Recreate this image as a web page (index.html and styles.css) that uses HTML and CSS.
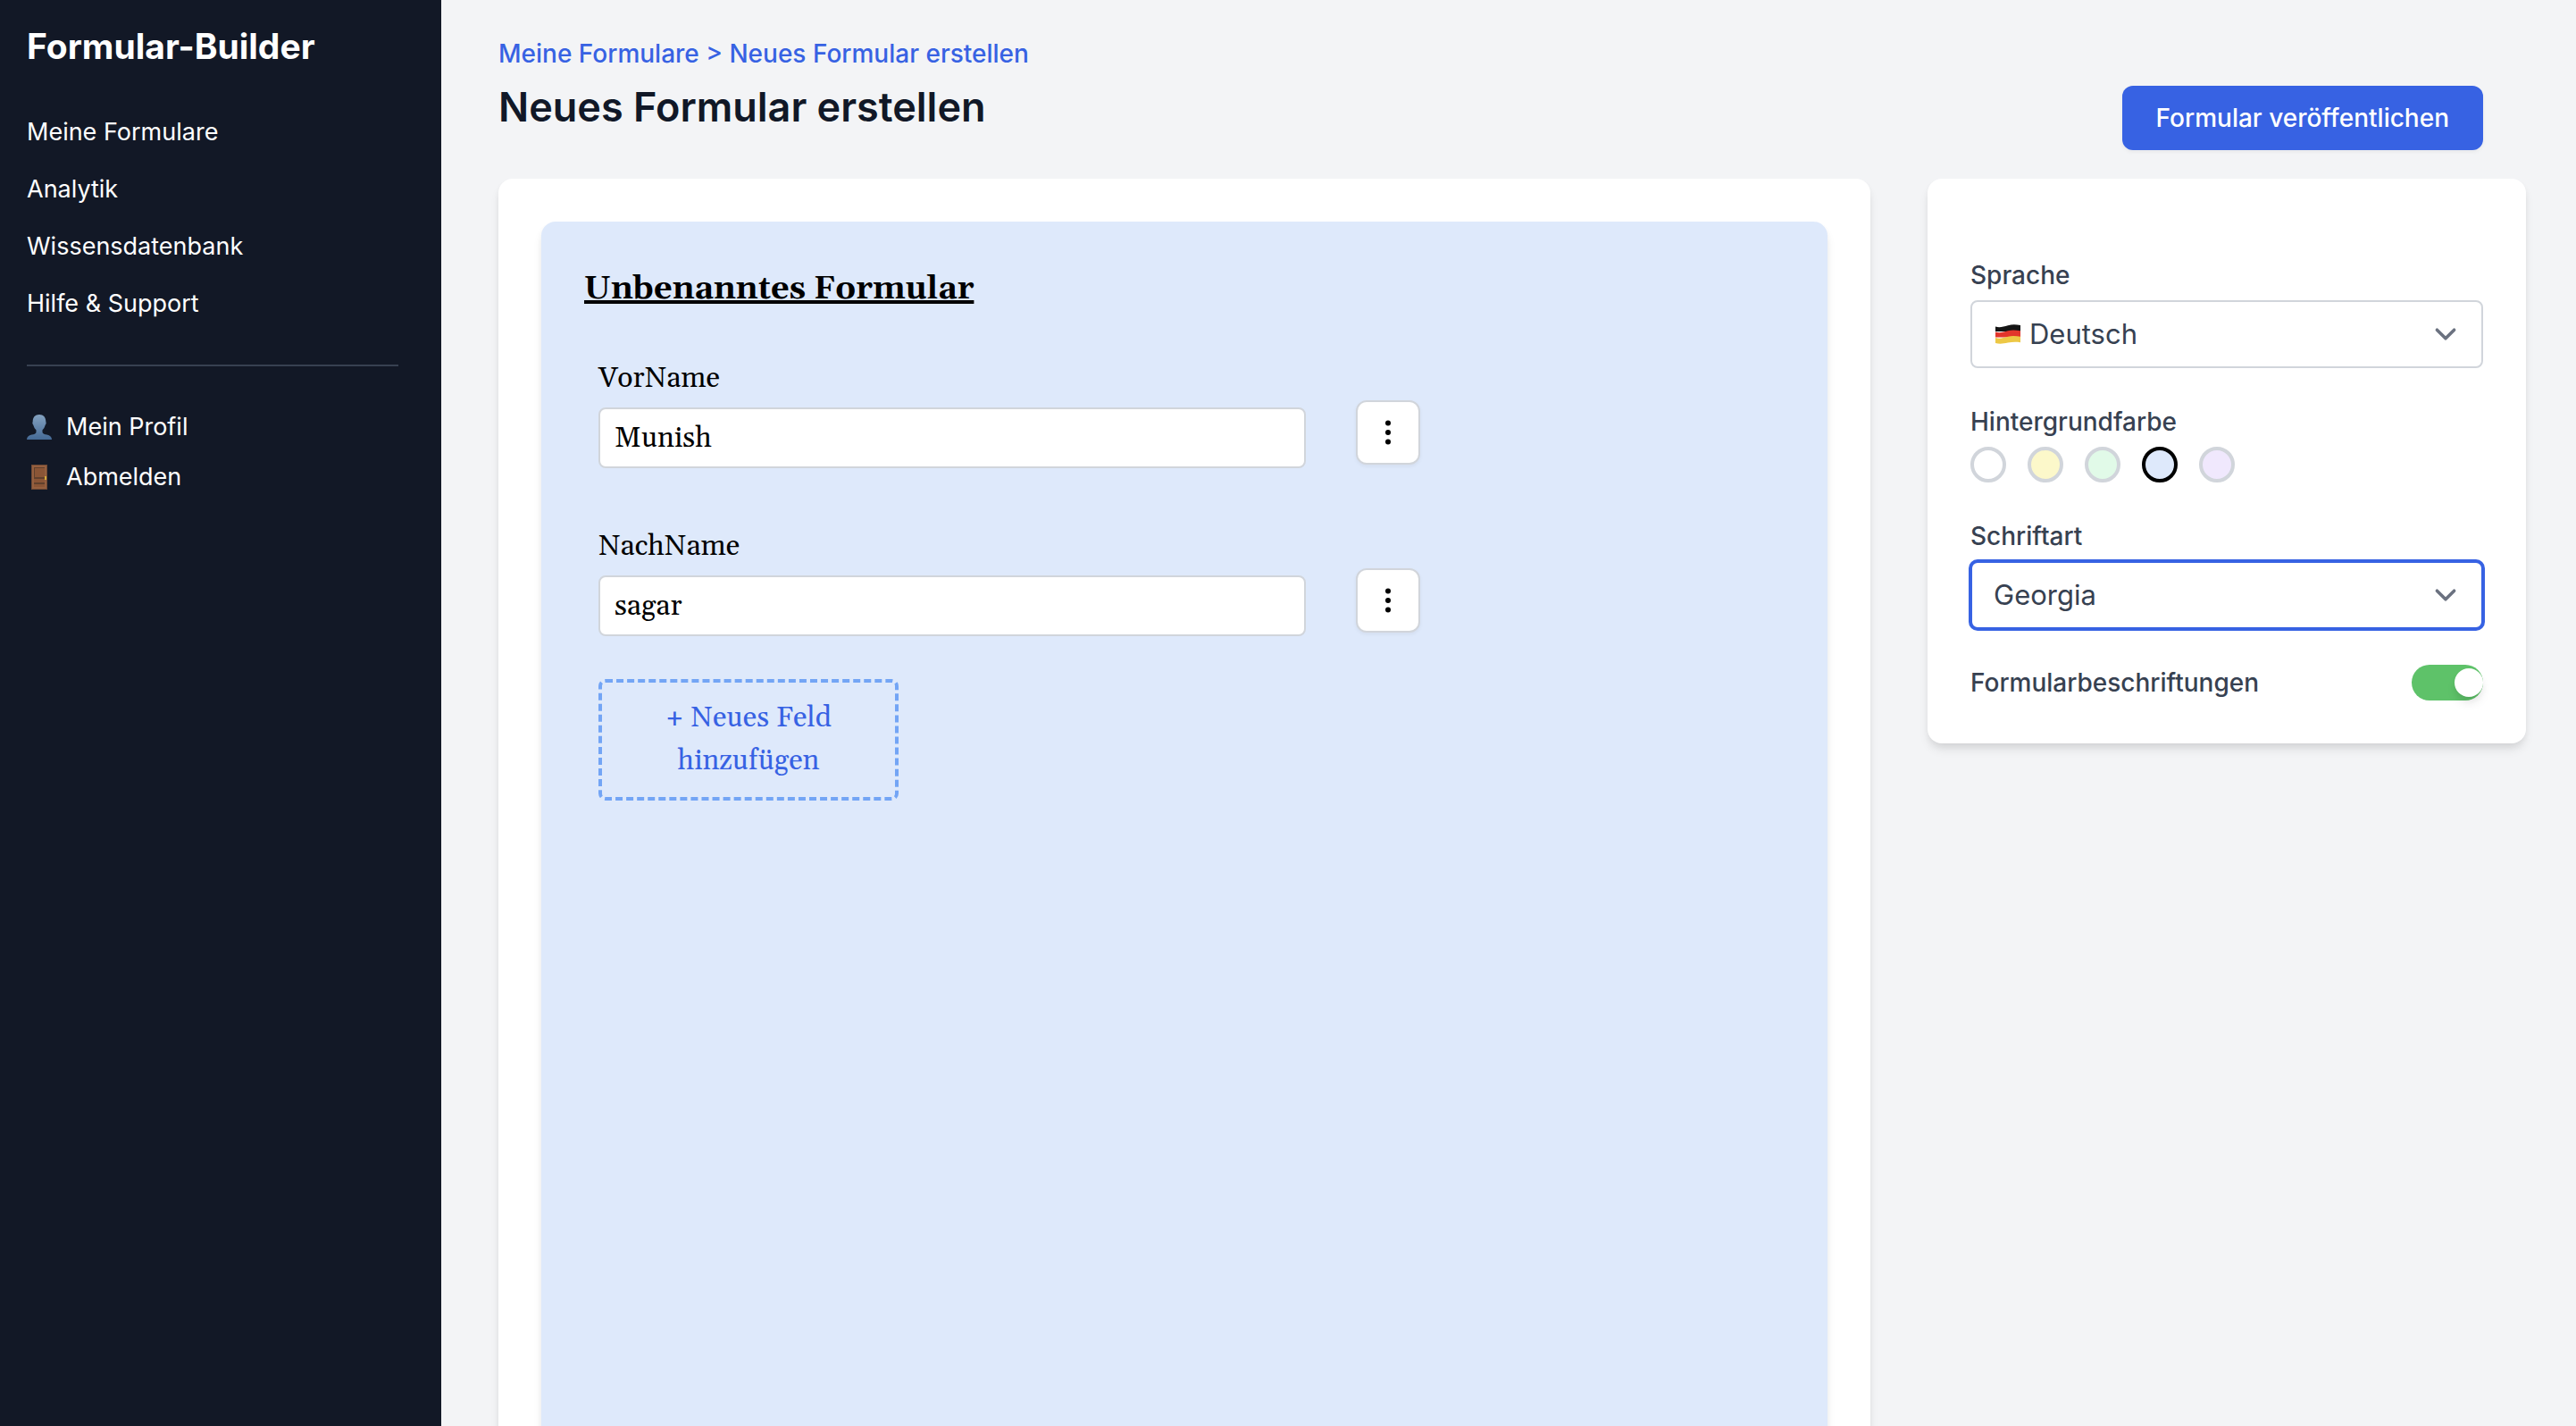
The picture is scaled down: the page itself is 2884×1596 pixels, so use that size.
FILE: index.html
```html
<!DOCTYPE html>
<html lang="de">
<head>
<meta charset="utf-8">
<meta name="viewport" content="width=device-width, initial-scale=1">
<title>Neues Formular erstellen – Formular-Builder</title>
<link rel="stylesheet" href="styles.css">
</head>
<body>
<div class="app">
  <aside class="sidebar">
    <div class="brand">Formular-Builder</div>
    <nav class="nav">
      <a href="#formulare">Meine Formulare</a>
      <a href="#analytik">Analytik</a>
      <a href="#wissen">Wissensdatenbank</a>
      <a href="#hilfe">Hilfe &amp; Support</a>
    </nav>
    <hr class="divider">
    <nav class="account">
      <a href="#profil">
        <svg class="glyph" viewBox="0 0 28 28" aria-hidden="true">
          <defs><linearGradient id="bust" x1="0" y1="0" x2="0" y2="1"><stop offset="0" stop-color="#84a2c0"/><stop offset="1" stop-color="#456a96"/></linearGradient></defs>
          <path fill="url(#bust)" d="M14 0c4.600 0 7.300 3 7.300 7.500 0 1 .4 1.200.3 2.200-.1 1.200-.8 1.500-1.100 2.500-.6 2.300-1.700 3.700-3 5.100v2.600c.5 1.600 2.500 2 5 2.600 3.500.8 5.500 2.500 5.500 5.500H0c0-3 2-4.700 5.500-5.500 2.500-.6 4.500-1 5-2.600v-2.600c-1.300-1.400-2.400-2.800-3-5.100-.3-1-1-1.300-1.100-2.500-.1-1 .3-1.200.3-2.200C6.700 3 9.400 0 14 0z"/>
        </svg>
        Mein Profil
      </a>
      <a href="#abmelden">
        <svg class="glyph" viewBox="0 0 28 28" aria-hidden="true">
          <path fill="#6f4a35" d="M5 0h18v28H5z"/>
          <path fill="#955f3f" d="M6 1h16v26H6z"/>
          <path fill="#8a5536" d="M8 3h12v11H8zM8 16h12v4H8zM8 21h12v4H8z"/>
          <path fill="#60402d" d="M8 3h12v1H8zM8 14h12v2H8zM8 20h12v2H8zM8 4h1v10H8z"/>
          <path fill="#d3aa3c" d="M20 13h2v4h-2z"/>
        </svg>
        Abmelden
      </a>
    </nav>
  </aside>

  <main class="main">
    <header class="header">
      <div>
        <a class="breadcrumb" href="#formulare">Meine Formulare &gt; Neues Formular erstellen</a>
        <h1 class="page-title">Neues Formular erstellen</h1>
      </div>
      <button class="publish" type="button">Formular veröffentlichen</button>
    </header>

    <div class="content">
      <section class="card">
        <form class="form">
          <h2 class="form-title">Unbenanntes Formular</h2>
          <div class="fields">
            <div class="field">
              <div class="field-body">
                <label for="vorname">VorName</label>
                <input id="vorname" type="text" value="Munish">
              </div>
              <button class="more" type="button" aria-label="Feldoptionen">
                <svg viewBox="0 0 32 32" aria-hidden="true"><circle cx="16" cy="5.500" r="3"/><circle cx="16" cy="16" r="3"/><circle cx="16" cy="26.500" r="3"/></svg>
              </button>
            </div>
            <div class="field">
              <div class="field-body">
                <label for="nachname">NachName</label>
                <input id="nachname" type="text" value="sagar">
              </div>
              <button class="more" type="button" aria-label="Feldoptionen">
                <svg viewBox="0 0 32 32" aria-hidden="true"><circle cx="16" cy="5.500" r="3"/><circle cx="16" cy="16" r="3"/><circle cx="16" cy="26.500" r="3"/></svg>
              </button>
            </div>
          </div>
          <button class="add" type="button">+ Neues Feld hinzufügen</button>
        </form>
      </section>

      <aside class="settings">
        <div class="setting">
          <label for="sprache">Sprache</label>
          <div class="with-flag">
            <select id="sprache"><option>Deutsch</option><option>English</option></select>
            <svg class="flag" viewBox="0 0 28 22" aria-hidden="true">
              <path fill="#151515" d="M0 2.500C5 4 9 2.500 14 1.200S23 .2 28 1v7H0z"/>
              <path fill="#e2352b" d="M0 8.500c5 1.500 9 0 14-1.300S23 6.500 28 7.200v7.300H0z"/>
              <path fill="#edc845" d="M0 15c5 1.500 9 0 14-1.300s9-.7 14 0v6.500c-5-.8-9-.6-14 .4S5 22.500 0 21z"/>
            </svg>
          </div>
        </div>
        <fieldset class="setting">
          <legend>Hintergrundfarbe</legend>
          <div class="swatches">
            <input class="white" type="radio" name="farbe" aria-label="Weiß">
            <input class="yellow" type="radio" name="farbe" aria-label="Gelb">
            <input class="green" type="radio" name="farbe" aria-label="Grün">
            <input class="blue" type="radio" name="farbe" aria-label="Blau" checked>
            <input class="purple" type="radio" name="farbe" aria-label="Violett">
          </div>
        </fieldset>
        <div class="setting">
          <label for="schriftart">Schriftart</label>
          <select id="schriftart" class="active"><option>Georgia</option><option>Arial</option></select>
        </div>
        <div class="setting toggle-row">
          <label for="beschriftungen">Formularbeschriftungen</label>
          <input id="beschriftungen" class="toggle" type="checkbox" role="switch" checked>
        </div>
      </aside>
    </div>
  </main>
</div>
</body>
</html>
```
FILE: styles.css
```css
*,
*::before {
  box-sizing: border-box;
}

:root {
  --blue: #3762e3;
  --sheet: #dee9fb;
  --border: #d1d5db;
  --ink: #374151;
  --shadow: 0 8px 12px -2px rgb(0 0 0 / 10%), 0 4px 8px -2px rgb(0 0 0 / 6%);
}

body {
  margin: 0;
  background: #f3f4f6;
  color: #111827;
  font: 400 27px/40px Inter, "Liberation Sans", sans-serif;
}

h1, h2, fieldset, legend {
  margin: 0;
  padding: 0;
  border: 0;
}

a {
  color: inherit;
  text-decoration: none;
}

button, input, select {
  margin: 0;
  font: inherit;
  color: inherit;
}

.app {
  display: flex;
  height: 100vh;
}

/* Sidebar */
.sidebar {
  flex: 0 0 494px;
  padding: 24px 48px 24px 30px;
  background: #121826;
  color: #fff;
}

.brand {
  margin-bottom: 48px;
  font-size: 39px;
  font-weight: 700;
  line-height: 56px;
}

.nav, .account {
  display: flex;
  flex-direction: column;
  gap: 24px;
}

.divider {
  height: 2px;
  margin: 48px 0;
  border: 0;
  background: #374151;
}

.account {
  gap: 16px;
}

.account a {
  display: flex;
  align-items: center;
  gap: 16px;
}

.glyph {
  width: 28px;
  height: 28px;
}

/* Main column */
.main {
  flex: 1;
  min-width: 0;
  padding: 40px 56px 0 64px;
  overflow: hidden auto;
  scrollbar-width: none;
}

.header {
  display: flex;
  align-items: flex-end;
  justify-content: space-between;
  height: 128px;
  margin-bottom: 32px;
  padding-right: 48px;
}

.header > div {
  align-self: flex-start;
}

.breadcrumb {
  display: block;
  color: var(--blue);
  font-size: 28px;
  font-weight: 500;
}

.page-title {
  margin-top: 8px;
  font-size: 45px;
  font-weight: 600;
  line-height: 64px;
}

.publish {
  padding: 16px 38px;
  border: 0;
  border-radius: 12px;
  background: var(--blue);
  color: #fff;
  font-size: 28px;
  font-weight: 500;
  box-shadow: 0 2px 4px rgb(0 0 0 / 5%);
}

.content {
  display: grid;
  grid-template-columns: minmax(0, 1fr) 670px;
  align-items: start;
  gap: 64px;
}

/* Form sheet */
.card {
  padding: 48px;
  border-radius: 16px;
  background: #fff;
  box-shadow: var(--shadow);
}

.form {
  min-height: 1600px;
  padding: 48px;
  border-radius: 16px;
  background: var(--sheet);
  color: #000;
  font: 400 32px/48px Gelasio, Georgia, "Liberation Serif", serif;
  box-shadow: var(--shadow);
}

.form-title {
  margin-bottom: 48px;
  font-size: 36px;
  font-weight: 700;
  line-height: 56px;
  text-decoration: underline;
  text-decoration-thickness: 4px;
}

.fields {
  display: flex;
  flex-direction: column;
  gap: 64px;
  max-width: 936px;
  margin-bottom: 48px;
  padding-left: 16px;
}

.field {
  display: flex;
  align-items: flex-start;
  gap: 56px;
}

.field-body {
  display: flex;
  flex: 1;
  flex-direction: column;
  gap: 8px;
  min-width: 0;
}

.field-body input {
  width: 100%;
  height: 68px;
  padding: 0 16px;
  border: 2px solid var(--border);
  border-radius: 8px;
  background: #fff;
}

.more {
  display: grid;
  place-items: center;
  width: 72px;
  height: 72px;
  margin-top: 48px;
  padding: 0;
  border: 2px solid var(--border);
  border-radius: 12px;
  background: #fff;
  box-shadow: 0 2px 4px rgb(0 0 0 / 5%);
}

.more svg {
  width: 32px;
  height: 32px;
}

.add {
  width: 336px;
  margin-left: 16px;
  padding: 16px 48px;
  border: 4px dashed #73a5f5;
  border-radius: 8px;
  background: none;
  color: var(--blue);
}

/* Settings panel */
.settings {
  display: flex;
  flex-direction: column;
  gap: 40px;
  padding: 88px 48px 48px;
  border-radius: 16px;
  background: #fff;
  color: var(--ink);
  box-shadow: var(--shadow);
}

.setting label,
.setting legend {
  display: block;
  margin-bottom: 8px;
  font-size: 28px;
  font-weight: 500;
}

.setting select {
  display: block;
  width: 100%;
  height: 76px;
  padding: 0 80px 0 24px;
  border: 2px solid var(--border);
  border-radius: 8px;
  appearance: none;
  background: #fff url("data:image/svg+xml,%3Csvg xmlns='http://www.w3.org/2000/svg' viewBox='0 0 20 20' fill='none'%3E%3Cpath d='M6 8l4 4 4-4' stroke='%236b7280' stroke-width='1.5' stroke-linecap='round' stroke-linejoin='round'/%3E%3C/svg%3E") right 16px center / 48px no-repeat;
  font-size: 31px;
}

.setting select.active {
  border-color: var(--blue);
  box-shadow: 0 0 0 2px var(--blue);
}

.with-flag {
  position: relative;
}

.with-flag select {
  padding-left: 64px;
}

.flag {
  position: absolute;
  top: 27px;
  left: 28px;
  width: 28px;
  height: 22px;
}

.swatches {
  display: flex;
  gap: 24px;
}

.swatches input {
  width: 40px;
  height: 40px;
  border: 4px solid var(--border);
  border-radius: 50%;
  appearance: none;
}

.swatches input:checked {
  border-color: #000;
}

.white { background: #fff; }
.yellow { background: #fcf8ca; }
.green { background: #e1fae8; }
.blue { background: var(--sheet); }
.purple { background: #f0e8fd; }

.toggle-row {
  display: flex;
  align-items: center;
  justify-content: space-between;
}

.toggle-row label {
  margin: 0;
}

.toggle {
  display: flex;
  align-items: center;
  width: 80px;
  height: 40px;
  border-radius: 20px;
  appearance: none;
  background: #9ca3af;
}

.toggle::before {
  content: "";
  width: 32px;
  height: 32px;
  border-radius: 50%;
  background: #fff;
  box-shadow: var(--shadow);
}

.toggle:checked {
  justify-content: flex-end;
  background: #5ec269;
}
```
